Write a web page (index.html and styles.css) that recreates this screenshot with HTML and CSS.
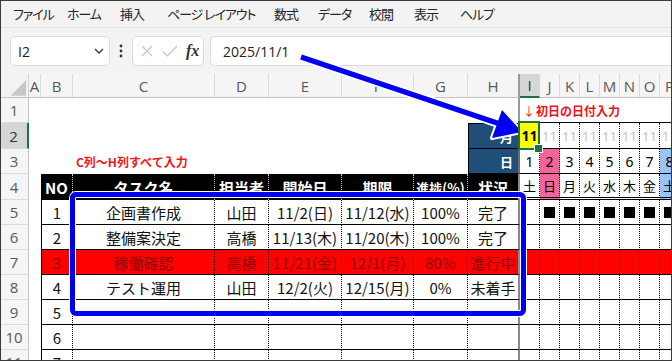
FILE: index.html
```html
<!DOCTYPE html>
<html lang="ja">
<head>
<meta charset="utf-8">
<link rel="stylesheet" href="styles.css">
</head>
<body>
<div class="app">
  <div class="menubar">
    <span>ファイル</span><span>ホーム</span><span>挿入</span><span>ページ レイアウト</span><span>数式</span><span>データ</span><span>校閲</span><span>表示</span><span>ヘルプ</span>
  </div>
  <div class="fbar">
    <div class="namebox"><span>I2</span>
      <svg width="10" height="6" viewBox="0 0 10 6"><path d="M1 1 L5 5 L9 1" fill="none" stroke="#333" stroke-width="1.3"/></svg>
    </div>
    <div class="dots"><svg width="4" height="14" viewBox="0 0 4 14"><circle cx="2" cy="2" r="1.4" fill="#333"/><circle cx="2" cy="7" r="1.4" fill="#333"/><circle cx="2" cy="12" r="1.4" fill="#333"/></svg></div>
    <div class="fxbox">
      <svg width="14" height="14" viewBox="0 0 14 14"><path d="M2 2 L12 12 M12 2 L2 12" stroke="#c4c4c4" stroke-width="1.2"/></svg>
      <svg width="16" height="14" viewBox="0 0 16 14"><path d="M1 7.5 L5.5 12 L15 2" fill="none" stroke="#c4c4c4" stroke-width="1.2"/></svg>
      <span class="fx">fx</span>
    </div>
    <div class="finput">2025/11/1</div>
  </div>
  <div class="sheet">
    <!-- column headers -->
    <div class="corner"><svg width="29" height="24" viewBox="0 0 29 24"><path d="M27 6 L27 22 L11 22 Z" fill="#c8c8c8"/></svg></div>
    <div class="ch">A</div><div class="ch">B</div><div class="ch">C</div><div class="ch">D</div><div class="ch">E</div><div class="ch">F</div><div class="ch">G</div><div class="ch fzh">H</div><div class="ch sel">I</div><div class="ch">J</div><div class="ch">K</div><div class="ch">L</div><div class="ch">M</div><div class="ch">N</div><div class="ch">O</div><div class="ch">P</div>

    <!-- row 1 -->
    <div class="rh">1</div><div></div><div></div><div></div><div></div><div></div><div></div><div></div><div class="fz"></div>
    <div class="g1 note"><span class="arr">↓</span>初日の日付入力</div><div class="g1"></div><div class="g1"></div><div class="g1"></div><div class="g1"></div><div class="g1"></div><div class="g1"></div><div class="g1"></div>

    <!-- row 2 -->
    <div class="rh sel">2</div><div></div><div></div><div></div><div></div><div></div><div></div><div></div><div class="navy top">月</div>
    <div class="gc yel selc">11</div><div class="gc mo">11</div><div class="gc mo">11</div><div class="gc mo">11</div><div class="gc mo">11</div><div class="gc mo">11</div><div class="gc mo">11</div><div class="gc mo">11</div>

    <!-- row 3 -->
    <div class="rh">3</div><div></div><div></div><div class="memo">C列～H列すべて入力</div><div></div><div></div><div></div><div></div><div class="navy">日</div>
    <div class="gc dy">1</div><div class="gc dy pink">2</div><div class="gc dy">3</div><div class="gc dy">4</div><div class="gc dy">5</div><div class="gc dy">6</div><div class="gc dy">7</div><div class="gc dy blue">8</div>

    <!-- row 4 -->
    <div class="rh">4</div><div></div><div class="hd">NO</div><div class="hd">タスク名</div><div class="hd">担当者</div><div class="hd">開始日</div><div class="hd">期限</div><div class="hd sm">進捗(%)</div><div class="hd last">状況</div>
    <div class="gc wk">土</div><div class="gc wk pink">日</div><div class="gc wk">月</div><div class="gc wk">火</div><div class="gc wk">水</div><div class="gc wk">木</div><div class="gc wk">金</div><div class="gc wk blue">土</div>

    <!-- row 5 -->
    <div class="rh">5</div><div></div><div class="tb b">1</div><div class="tb">企画書作成</div><div class="tb">山田</div><div class="tb">11/2(日)</div><div class="tb">11/12(水)</div><div class="tb">100%</div><div class="tb h">完了</div>
    <div class="gc"></div><div class="gc"><span class="sq"></span></div><div class="gc"><span class="sq"></span></div><div class="gc"><span class="sq"></span></div><div class="gc"><span class="sq"></span></div><div class="gc"><span class="sq"></span></div><div class="gc"><span class="sq"></span></div><div class="gc"><span class="sq"></span></div>

    <!-- row 6 -->
    <div class="rh">6</div><div></div><div class="tb b">2</div><div class="tb">整備案決定</div><div class="tb">高橋</div><div class="tb">11/13(木)</div><div class="tb">11/20(木)</div><div class="tb">100%</div><div class="tb h">完了</div>
    <div class="gc"></div><div class="gc"></div><div class="gc"></div><div class="gc"></div><div class="gc"></div><div class="gc"></div><div class="gc"></div><div class="gc"></div>

    <!-- row 7 -->
    <div class="rh">7</div><div></div><div class="tb b red">3</div><div class="tb red">稼働確認</div><div class="tb red">高橋</div><div class="tb red">11/21(金)</div><div class="tb red">12/1(月)</div><div class="tb red">80%</div><div class="tb h red">進行中</div>
    <div class="gc red"></div><div class="gc red"></div><div class="gc red"></div><div class="gc red"></div><div class="gc red"></div><div class="gc red"></div><div class="gc red"></div><div class="gc red"></div>

    <!-- row 8 -->
    <div class="rh">8</div><div></div><div class="tb b">4</div><div class="tb">テスト運用</div><div class="tb">山田</div><div class="tb">12/2(火)</div><div class="tb">12/15(月)</div><div class="tb">0%</div><div class="tb h">未着手</div>
    <div class="gc"></div><div class="gc"></div><div class="gc"></div><div class="gc"></div><div class="gc"></div><div class="gc"></div><div class="gc"></div><div class="gc"></div>

    <!-- row 9 -->
    <div class="rh">9</div><div></div><div class="tb b">5</div><div class="tb"></div><div class="tb"></div><div class="tb"></div><div class="tb"></div><div class="tb"></div><div class="tb h"></div>
    <div class="gc"></div><div class="gc"></div><div class="gc"></div><div class="gc"></div><div class="gc"></div><div class="gc"></div><div class="gc"></div><div class="gc"></div>

    <!-- row 10 -->
    <div class="rh">10</div><div></div><div class="tb b">6</div><div class="tb"></div><div class="tb"></div><div class="tb"></div><div class="tb"></div><div class="tb"></div><div class="tb h"></div>
    <div class="gc"></div><div class="gc"></div><div class="gc"></div><div class="gc"></div><div class="gc"></div><div class="gc"></div><div class="gc"></div><div class="gc"></div>

    <!-- row 11 -->
    <div class="rh">11</div><div></div><div class="tb b">7</div><div class="tb"></div><div class="tb"></div><div class="tb"></div><div class="tb"></div><div class="tb"></div><div class="tb h"></div>
    <div class="gc"></div><div class="gc"></div><div class="gc"></div><div class="gc"></div><div class="gc"></div><div class="gc"></div><div class="gc"></div><div class="gc"></div>
  </div>

  <div class="callout"></div>
  <svg class="arrow" width="672" height="361" viewBox="0 0 672 361">
    <line x1="301" y1="57" x2="500" y2="124" stroke="#fff" stroke-width="9" stroke-linecap="round"/>
    <polygon points="522,132 502,110 492,138" fill="#fff" stroke="#fff" stroke-width="4" stroke-linejoin="round"/>
    <line x1="301" y1="57" x2="500" y2="124" stroke="#0000f0" stroke-width="5.5"/>
    <polygon points="522,132 502,110 492,138" fill="#0000f0"/>
  </svg>
</div>
</body>
</html>
```

FILE: styles.css
```css
* { box-sizing: border-box; margin: 0; padding: 0; }
html, body { width: 672px; height: 361px; overflow: hidden; }
body {
  font-family: "Noto Sans CJK JP", "Noto Sans", sans-serif;
  background: #f3f3f3;
  color: #000;
}
.app {
  position: relative;
  width: 672px;
  height: 361px;
  overflow: hidden;
  background: #f3f3f3;
}
.app::after {
  content: "";
  position: absolute;
  inset: 0;
  border: 1px solid #3a3a3a;
  pointer-events: none;
}

/* menu */
.menubar {
  height: 28px;
  display: grid;
  grid-template-columns: 54px 53px 47px 107px 44px 51px 45px 46px auto;
  align-items: center;
  padding-left: 13px;
  font-size: 13px;
  letter-spacing: -1.1px;
  color: #242424;
  font-feature-settings: "palt";
  border-bottom: 1px solid #e4e4e4;
  white-space: nowrap;
}

/* formula bar */
.fbar {
  height: 46px;
  display: flex;
  align-items: flex-start;
  padding: 8px 0 0 10px;
}
.namebox {
  width: 100px;
  height: 30px;
  background: #fff;
  border: 1px solid #dadada;
  border-radius: 5px;
  display: flex;
  align-items: center;
  justify-content: space-between;
  padding: 0 5px 0 7px;
  font-family: "Open Sans", "Noto Sans", sans-serif;
  font-size: 14px;
  color: #222;
}
.dots {
  width: 22px;
  height: 30px;
  display: flex;
  align-items: center;
  justify-content: center;
}
.fxbox {
  width: 72px;
  height: 30px;
  background: #fff;
  border: 1px solid #dadada;
  border-radius: 5px;
  display: flex;
  align-items: center;
  gap: 8px;
  padding-left: 7px;
}
.fx {
  font-family: "Liberation Serif", serif;
  font-style: italic;
  font-weight: bold;
  font-size: 16px;
  color: #333;
}
.finput {
  flex: 1;
  height: 30px;
  margin-left: 6px;
  background: #fff;
  border: 1px solid #dadada;
  border-right: none;
  border-radius: 5px 0 0 5px;
  padding-left: 12px;
  display: flex;
  align-items: center;
  font-family: "Open Sans", "Noto Sans", sans-serif;
  font-size: 14px;
  color: #222;
}

/* sheet */
.sheet {
  display: grid;
  grid-template-columns: 29px 12px 32px 142px 54px 73px 72px 54px 52px repeat(8, 20px);
  grid-template-rows: 24px 25px 26px 25px 26px repeat(7, 25px);
  background: #fff;
  font-size: 15px;
  width: 680px;
}
.sheet > div {
  display: flex;
  align-items: center;
  justify-content: center;
  overflow: hidden;
  white-space: nowrap;
  min-width: 0;
}
.corner {
  background: #f3f3f3;
  border-right: 1px solid #d0d0d0;
  border-bottom: 1px solid #c4c4c4;
}
.ch {
  background: #f5f5f5;
  border-right: 1px solid #dadada;
  border-bottom: 1px solid #c4c4c4;
  font-family: "Open Sans", "Noto Sans", sans-serif;
  font-size: 15px;
  color: #595959;
}
.ch.sel {
  background: #d6d6d6;
  color: #333;
  border-bottom: 2px solid #1e7145;
}
.ch.fzh { border-right: 2px solid #9a9a9a; }
.rh {
  background: #f5f5f5;
  border-right: 1px solid #c4c4c4;
  border-bottom: 1px solid #dadada;
  font-family: "Open Sans", "Noto Sans", sans-serif;
  font-size: 15px;
  color: #595959;
}
.rh.sel {
  background: #d6d6d6;
  color: #333;
  border-right: 2px solid #1e7145;
}
.fz { border-right: 2px solid #9a9a9a; }

/* notes */
.sheet > .note {
  overflow: visible;
  justify-content: flex-start;
  padding-left: 3px;
  color: #e8151b;
  font-size: 12px;
  font-weight: bold;
}
.arr { font-weight: normal; margin-right: 1px; }
.sheet > .memo {
  overflow: visible;
  justify-content: flex-start;
  padding-left: 3px;
  color: #f0151b;
  font-size: 12px;
  font-weight: bold;
}

/* month/day labels */
.navy {
  background: #1f4e79;
  color: #fff;
  font-weight: bold;
  font-size: 13px;
  border-left: 1px solid #000;
  border-bottom: 1px solid #000;
  border-right: 2px solid #6b6b6b;
}
.sheet > .navy { justify-content: flex-end; padding-right: 5px; }
.navy.top { border-top: 1px solid #000; }

/* gantt */
.g1 { border-bottom: 1px solid #000; }
.gc {
  border-right: 1px dotted #000;
  border-bottom: 1px solid #000;
  font-family: "Noto Sans", sans-serif;
  font-size: 14px;
}
.mo { color: #c3c3c3; font-size: 13px; }
.yel { background: #ffff00; font-weight: bold; font-size: 14px; }
.selc { position: relative; z-index: 2; overflow: visible !important; }
.selc::after {
  content: "";
  position: absolute;
  left: -2px;
  top: -2px;
  right: -1px;
  bottom: -2px;
  border: 2px solid #1e7145;
}
.selc::before {
  content: "";
  position: absolute;
  right: -4px;
  bottom: -5px;
  width: 7px;
  height: 7px;
  background: #1e7145;
  border: 1px solid #fff;
  z-index: 3;
}
.dy { font-size: 14px; }
.wk {
  font-family: "Noto Sans CJK JP", sans-serif;
  font-size: 13px;
  border-bottom: 3px double #000;
}
.pink { background: #f4649c; }
.blue { background: #9cc3f5; }
.sq {
  width: 11px;
  height: 11px;
  background: #000;
}

/* table header */
.hd {
  background: #000;
  color: #fff;
  font-weight: bold;
  font-size: 15px;
  border-right: 1px dotted #c8c8c8;
}
.hd.sm { font-size: 13px; }
.hd.last { border-right: 2px solid #8a8a8a; }

/* table body */
.tb {
  border-bottom: 1px solid #000;
  border-right: 1px dotted #000;
  font-size: 15px;
  color: #111;
}
.tb.b { border-left: 1px solid #000; }
.tb.h { border-right: 2px solid #8a8a8a; }
.red { background: #ff0000; color: #8e0000; }

/* overlays */
.callout {
  position: absolute;
  left: 70px;
  top: 192px;
  width: 456px;
  height: 124px;
  border: 5px solid #0000f0;
  border-radius: 6px;
  box-shadow: 0 0 0 1px #fff, inset 0 0 0 1px #fff;
}
.arrow {
  position: absolute;
  left: 0;
  top: 0;
  pointer-events: none;
}
```
